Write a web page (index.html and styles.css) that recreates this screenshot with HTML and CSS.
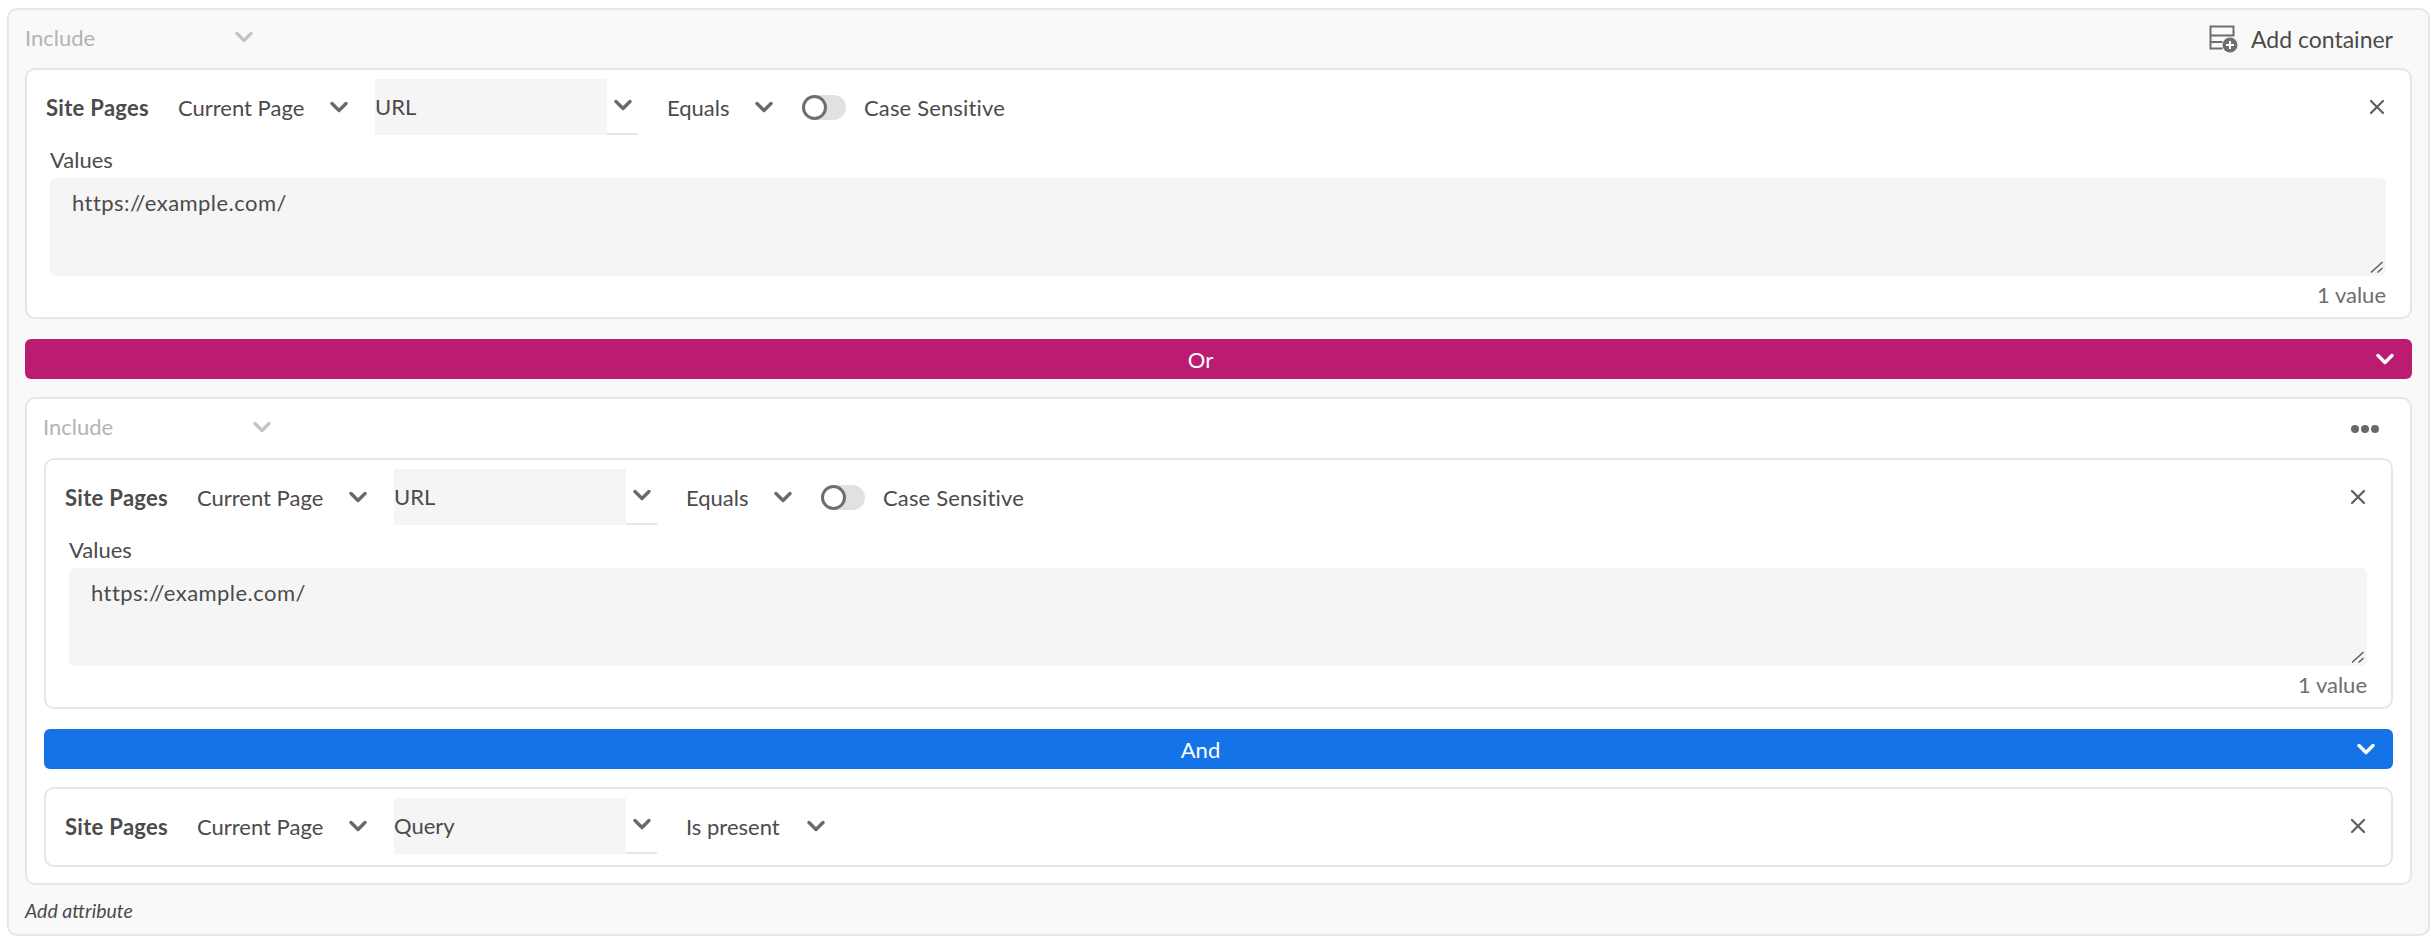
FILE: index.html
```html
<!DOCTYPE html>
<html lang="en">
<head>
    <meta charset="UTF-8">
    <title>Segment container</title>
    <link rel="stylesheet" href="styles.css">
</head>
<body>
    <svg class="defs" width="0" height="0">
        <symbol id="chev" viewBox="0 0 18 12"><path d="M2 2.500 9 9.500l7-7" fill="none" stroke="currentColor" stroke-width="3.400" stroke-linecap="round" stroke-linejoin="round"/></symbol>
        <symbol id="cross" viewBox="0 0 16 16"><path d="M2 2l12 12M14 2 2 14" fill="none" stroke="currentColor" stroke-width="2.200" stroke-linecap="round"/></symbol>
        <symbol id="grip" viewBox="0 0 13 12"><path d="M1 11.500 12.500 1M7.500 11.500 12.500 7" fill="none" stroke="currentColor" stroke-width="1.300"/></symbol>
    </svg>

    <div class="container root">
        <div class="container-head">
            <div class="include">Include <svg class="chev"><use href="#chev"/></svg></div>
            <div class="add-container">
                <svg class="add-icon" viewBox="0 0 29 28">
                    <path d="M1.500 1.500h23v9h-23zM1.500 10.500v13h12M1.500 17h12" fill="none" stroke="currentColor" stroke-width="2"/>
                    <circle cx="21" cy="20" r="7.500" fill="currentColor"/>
                    <path d="M21 16v8M17 20h8" stroke="#fff" stroke-width="2"/>
                </svg>
                Add container
            </div>
        </div>

        <div class="card">
            <div class="row">
                <span class="attr">Site Pages</span>
                <span class="picker picker-scope">Current Page <svg class="chev"><use href="#chev"/></svg></span>
                <span class="combo"><span class="combo-input">URL</span><svg class="chev"><use href="#chev"/></svg></span>
                <span class="picker picker-op">Equals <svg class="chev"><use href="#chev"/></svg></span>
                <span class="switch"><span class="knob"></span></span>
                <span class="switch-label">Case Sensitive</span>
                <svg class="close"><use href="#cross"/></svg>
            </div>
            <div class="values-label">Values</div>
            <div class="values-box">
                <textarea class="values" spellcheck="false">https://example.com/</textarea>
                <svg class="grip"><use href="#grip"/></svg>
            </div>
            <div class="count">1 value</div>
        </div>

        <div class="logic logic-or"><span class="logic-text">Or</span><svg class="chev"><use href="#chev"/></svg></div>

        <div class="container nested">
            <div class="container-head">
                <div class="include">Include <svg class="chev"><use href="#chev"/></svg></div>
                <div class="dots"><i></i><i></i><i></i></div>
            </div>

            <div class="card">
                <div class="row">
                    <span class="attr">Site Pages</span>
                    <span class="picker picker-scope">Current Page <svg class="chev"><use href="#chev"/></svg></span>
                    <span class="combo"><span class="combo-input">URL</span><svg class="chev"><use href="#chev"/></svg></span>
                    <span class="picker picker-op">Equals <svg class="chev"><use href="#chev"/></svg></span>
                    <span class="switch"><span class="knob"></span></span>
                    <span class="switch-label">Case Sensitive</span>
                    <svg class="close"><use href="#cross"/></svg>
                </div>
                <div class="values-label">Values</div>
                <div class="values-box">
                    <textarea class="values" spellcheck="false">https://example.com/</textarea>
                    <svg class="grip"><use href="#grip"/></svg>
                </div>
                <div class="count">1 value</div>
            </div>

            <div class="logic logic-and"><span class="logic-text">And</span><svg class="chev"><use href="#chev"/></svg></div>

            <div class="card card-short">
                <div class="row">
                    <span class="attr">Site Pages</span>
                    <span class="picker picker-scope">Current Page <svg class="chev"><use href="#chev"/></svg></span>
                    <span class="combo"><span class="combo-input">Query</span><svg class="chev"><use href="#chev"/></svg></span>
                    <span class="picker picker-present">Is present <svg class="chev"><use href="#chev"/></svg></span>
                    <svg class="close"><use href="#cross"/></svg>
                </div>
            </div>
        </div>

        <div class="add-attr">Add attribute</div>
    </div>
</body>
</html>
```

FILE: styles.css
```css
* {
    margin: 0;
    padding: 0;
    box-sizing: border-box;
}

body {
    font-family: 'Lato', 'Noto Sans', sans-serif;
    font-size: 22px;
    color: #4b4b4b;
    background: white;
    padding: 8px 6px 5px 7px;
}

.defs {
    position: absolute;
}

.container {
    border: 2px solid #e6e6e6;
    border-radius: 10px;
    padding: 0 16px;
}

.root {
    background: #f9f9f9;
    height: 928px;
}

.nested {
    background: white;
    margin-top: 18px;
    padding: 0 17px 16px;
}

.container-head {
    display: flex;
    align-items: center;
    justify-content: space-between;
    height: 58px;
}

.nested .container-head {
    height: 59px;
}

.include {
    display: flex;
    align-items: center;
    width: 228px;
    justify-content: space-between;
    color: #b3b3b3;
    padding-bottom: 4px;
}

.nested .include {
    margin-left: -1px;
}

.include .chev {
    color: #c4c4c4;
}

.chev {
    width: 18px;
    height: 12px;
    flex: none;
    color: #6a6a6a;
}

.add-container {
    display: flex;
    align-items: center;
    gap: 13px;
    padding-right: 19px;
    font-size: 23px;
}

.add-icon {
    width: 29px;
    height: 28px;
    color: #6e6e6e;
}

.dots {
    display: flex;
    gap: 2px;
    padding-right: 14px;
}

.dots i {
    width: 8px;
    height: 8px;
    border-radius: 50%;
    background: #6a6a6a;
}

.card {
    background: white;
    border: 2px solid #e6e6e6;
    border-radius: 10px;
    padding: 9px 25px 0 19px;
}

.card-short {
    padding-bottom: 11px;
}

.row {
    display: flex;
    align-items: center;
    height: 56px;
}

.attr {
    font-weight: 700;
    width: 132px;
    letter-spacing: 0.3px;
}

.picker {
    display: flex;
    align-items: center;
    justify-content: space-between;
    flex: none;
}

.picker-scope {
    width: 170px;
    margin-right: 27px;
}

.picker-op {
    width: 106px;
    margin-left: 29px;
}

.picker-present {
    width: 139px;
    margin-left: 29px;
}

.combo {
    display: flex;
    align-items: center;
    width: 263px;
    height: 56px;
    border-bottom: 2px solid #e6e6e6;
}

.combo-input {
    width: 232px;
    height: 56px;
    background: #f5f5f5;
    line-height: 56px;
    flex: none;
    margin-bottom: -2px;
}

.combo .chev {
    margin-left: 7px;
    margin-top: -2px;
}

.switch {
    width: 44px;
    height: 25px;
    background: #e1e1e1;
    border-radius: 13px;
    margin-left: 29px;
    flex: none;
}

.knob {
    display: block;
    width: 25px;
    height: 25px;
    border: 3px solid #6e6e6e;
    border-radius: 50%;
    background: white;
}

.switch-label {
    margin-left: 18px;
    letter-spacing: 0.15px;
}

.close {
    width: 16px;
    height: 16px;
    margin-left: auto;
    color: #5f5f5f;
}

.values-label {
    margin: 13px 0 6px 4px;
    line-height: 24px;
}

.values-box {
    position: relative;
    margin: 0 -1px 0 4px;
}

.values {
    display: block;
    width: 100%;
    height: 98px;
    border: none;
    border-radius: 6px;
    background: #f5f5f5;
    color: #4b4b4b;
    font: inherit;
    letter-spacing: 0.45px;
    padding: 11px 22px;
    resize: none;
    outline: none;
}

.grip {
    position: absolute;
    right: 3px;
    bottom: 3px;
    width: 13px;
    height: 12px;
    color: #555;
}

.count {
    text-align: right;
    color: #6e6e6e;
    line-height: 38px;
    margin-right: -1px;
    height: 41px;
}

.logic {
    display: flex;
    align-items: center;
    height: 40px;
    margin-top: 20px;
    padding-right: 18px;
    border-radius: 6px;
    color: white;
}

.logic .chev {
    color: white;
}

.logic-text {
    flex: 1;
    text-align: center;
}

.logic-or {
    background: #bb1c72;
}

.logic-and {
    background: #1473e6;
    margin-bottom: 18px;
}

.add-attr {
    font-style: italic;
    font-size: 19.5px;
    margin-top: 14px;
    line-height: 24px;
}
```
